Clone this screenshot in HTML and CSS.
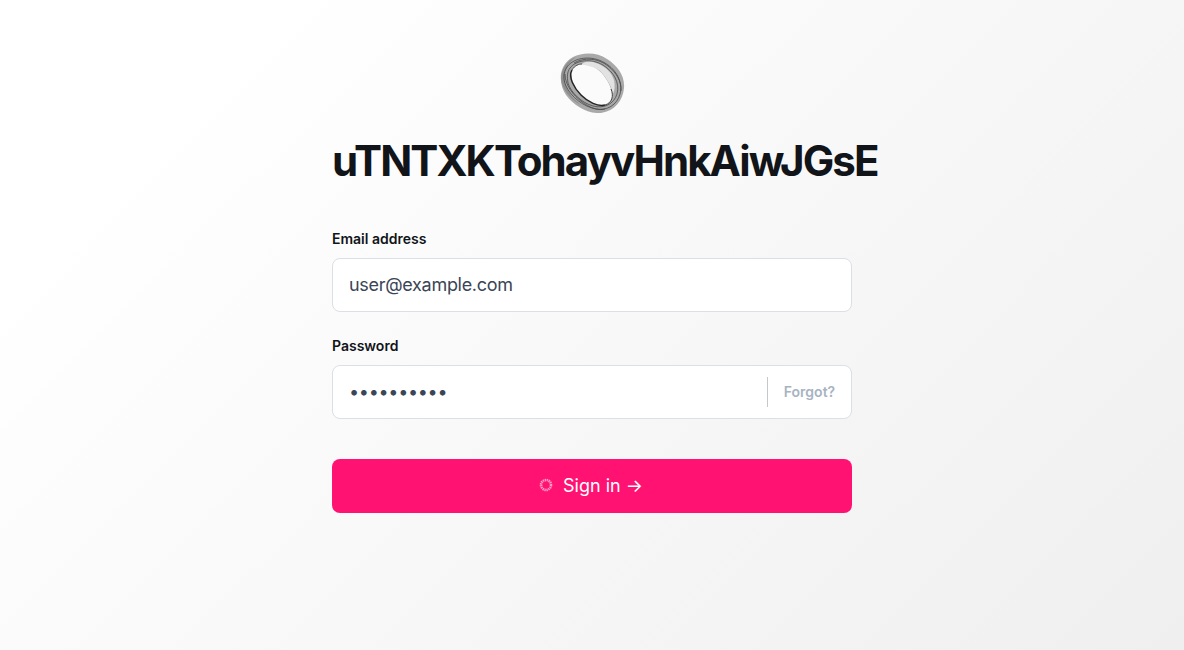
FILE: index.html
```html
<!DOCTYPE html>
<html lang="en">
<head>
<meta charset="utf-8">
<title>Sign in</title>
<link rel="stylesheet" href="styles.css">
</head>
<body>
<main class="card">
  <svg class="logo" width="66" height="60" viewBox="0 0 66 60" fill="none" aria-hidden="true">
    <path fill-rule="evenodd" d="M14 4C24-1 38-1 48 6C59 13 66 23 65 35C64 47 56 58 42 60C29 61 15 53 7 42C0 32-2 13 14 4ZM13 17C9 24 15 35 22 42C29 49 39 54 46 52C53 50 55 43 52 36C50 29 44 20 38 16C30 10 18 9 13 17Z" fill="#a9a9a9"/>
    <path d="M23 11C27 8 32 8 37 10C46 13 53 20 55 27C56 32 56 37 54 41C53 36 51 31 48 27C45 22 42 18 38 16C33 13 28 13 23 11Z" fill="#e2e2e2"/>
    <path d="M2 26C2 16 8 7 17 4C8 10 5 19 6 28C7 37 14 46 22 52C12 47 3 37 2 26Z" fill="#8f8f8f"/>
    <g stroke="#3a3a3a" stroke-width=".8" opacity=".85">
      <path d="M8 14C15 4 33 2 46 10C58 17 64 30 61 41C58 52 48 58 37 56C25 54 12 44 7 33C4 26 4 20 8 14Z"/>
      <path d="M11 15C17 7 32 5 44 12C55 19 61 30 58 41C55 51 45 56 34 53C23 50 12 40 9 30C8 24 8 19 11 15Z"/>
      <path d="M15 10C25 4 39 5 49 13C57 19 63 29 62 38"/>
      <path d="M6 21C6 32 14 42 23 49C30 54 38 58 46 56"/>
    </g>
    <path d="M13 17C9 24 15 35 22 42C29 49 39 54 46 52" stroke="#242424" stroke-width="1.5"/>
    <path d="M46 52C53 50 55 43 52 36" stroke="#444" stroke-width="1"/>
    <path d="M13 17C16 12 20 11 23 11" stroke="#555" stroke-width="1"/>
  </svg>
  <h1 class="title">uTNTXKTohayvHnkAiwJGsE</h1>
  <form class="form">
    <label class="label" for="email">Email address</label>
    <input class="field" id="email" type="text" value="user@example.com">
    <label class="label label-password" for="password">Password</label>
    <div class="field-wrap">
      <input class="field field-inner" id="password" type="password" value="1234567890">
      <a class="forgot" href="#">Forgot?</a>
    </div>
    <button class="submit" type="button">
      <svg class="spinner" width="14" height="14" viewBox="0 0 14 14" aria-hidden="true">
        <circle cx="7" cy="7" r="5" fill="none" stroke="#ff9cc4" stroke-width="2.6" stroke-dasharray="1.35 .62"/>
      </svg>
      <span>Sign in →</span>
    </button>
  </form>
</main>
</body>
</html>
```

FILE: styles.css
```css
* { box-sizing: border-box; }
html, body { height: 100%; }
body {
  margin: 0;
  font-family: Inter, "Liberation Sans", sans-serif;
  background: linear-gradient(135deg, #ffffff 15%, #efefef 100%);
  color: #111418;
  overflow: hidden;
}
.card {
  width: 520px;
  margin: 0 auto;
  padding-top: 53px;
  display: flex;
  flex-direction: column;
  align-items: center;
}
.logo { display: block; }
.title {
  align-self: flex-start;
  margin: 20px 0 0;
  font-size: 42px;
  line-height: 56px;
  font-weight: 700;
  letter-spacing: -1.9px;
  white-space: nowrap;
}
.form {
  width: 100%;
  margin-top: 40px;
  display: flex;
  flex-direction: column;
}
.label {
  font-size: 14px;
  line-height: 20px;
  font-weight: 600;
  margin-bottom: 9px;
}
.label-password { margin-top: 24px; }
.field {
  width: 100%;
  height: 54px;
  padding: 0 16px 2px;
  border: 1px solid #dcdfe3;
  border-radius: 8px;
  background: #fff;
  font: 400 18px Inter, "Liberation Sans", sans-serif;
  letter-spacing: -0.3px;
  color: #3a4556;
  outline: none;
}
.field-wrap {
  height: 54px;
  display: flex;
  align-items: center;
  border: 1px solid #dcdfe3;
  border-radius: 8px;
  background: #fff;
}
.field-inner {
  flex: 1;
  min-width: 0;
  height: 30px;
  border: 0;
  border-right: 1px solid #c4c7cb;
  border-radius: 0;
  background: transparent;
}
.forgot {
  width: 83px;
  padding-bottom: 2px;
  text-align: center;
  font-size: 14px;
  font-weight: 600;
  color: #a7b3c2;
  text-decoration: none;
}
.submit {
  height: 54px;
  margin-top: 40px;
  padding: 0 2px 2px 0;
  display: flex;
  align-items: center;
  justify-content: center;
  gap: 10px;
  border: 0;
  border-radius: 8px;
  background: #ff1272;
  color: #fff;
  font: 400 18px Inter, "Liberation Sans", sans-serif;
}
.spinner { display: block; }
```
